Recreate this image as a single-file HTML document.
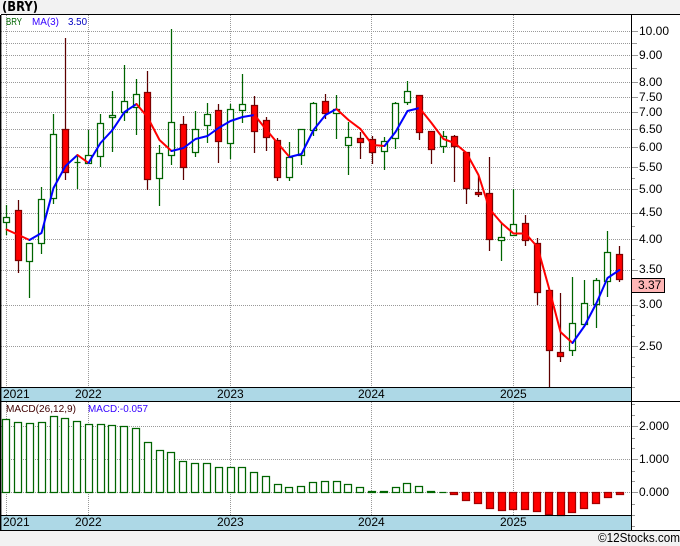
<!DOCTYPE html>
<html><head><meta charset="utf-8"><style>
html,body{margin:0;padding:0;background:#f2f2f2}
svg{display:block}
text{font-family:"Liberation Sans",Arial,sans-serif;font-size:12px;fill:#000}
.l{shape-rendering:crispEdges}
</style></head><body>
<svg width="680" height="546" viewBox="0 0 680 546" xmlns="http://www.w3.org/2000/svg">
<rect x="0" y="0" width="680" height="546" fill="#f2f2f2"/>
<rect x="0" y="14" width="680" height="516" fill="#fff"/>
<rect x="1" y="388" width="630" height="13" fill="#add8e6"/>
<rect x="1" y="516" width="630" height="14" fill="#add8e6"/>

<!-- grid -->
<g class="l" stroke="#999" stroke-width="1" stroke-dasharray="1 1" fill="none">
<path d="M1 31.5H631M1 43.5H631M1 55.5H631M1 68.5H631M1 82.5H631M1 97.5H631M1 112.5H631M1 129.5H631M1 147.5H631M1 167.5H631M1 189.5H631M1 213.5H631M1 239.5H631M1 270.5H631M1 305.5H631M1 346.5H631"/>
<path d="M1 426.5H631M1 459.5H631M1 492.5H631"/>
<path d="M6.5 15V387M88.5 15V387M230.5 15V387M371.5 15V387M513.5 15V387"/>
<path d="M6.5 402V515M88.5 402V515M230.5 402V515M371.5 402V515M513.5 402V515"/>
</g>

<!-- wicks -->
<g fill="none" stroke-width="1.25">
<path stroke="#006400" d="M6.5 205V235M29.5 243V298M41.5 187V254M53.5 114V204M77.5 155V189M88.5 130V163M100.5 114V167M112.5 91V152M124.5 65V121M136.5 79V135M159.5 145V206M171.5 29V165M195.5 111V157M207.5 103V143M230.5 104V159M242.5 74V123M289.5 142V181M301.5 129V165M313.5 102V136M336.5 95V139M348.5 122V175M384.5 137V170M395.5 102V149M407.5 81V105M443.5 131V153M501.5 223V261M513.5 189V235M572.5 277V356M584.5 280V324M596.5 278V328M607.5 231V297"/>
<path stroke="#5c0000" d="M18.5 200V273M65.5 38V180M147.5 71V190M183.5 116V180M218.5 104V163M254.5 96V153M266.5 117V151M277.5 138V181M325.5 94V119M360.5 132V159M372.5 136V164M419.5 95V140M431.5 131V164M454.5 135V182M466.5 152V204M478.5 175V197M489.5 157V251M525.5 215V246M537.5 238V305M549.5 290V387M560.5 293V362M619.5 246V282"/>
<!-- hollow bodies -->
<path fill="#fff" stroke="#006400" d="M3.5 217.5h6v5h-6zM26.5 243.5h6v18h-6zM38.5 199.5h6v44h-6zM50.5 134.5h6v64h-6zM74.5 162.5h6v0h-6zM85.5 155.5h6v8h-6zM97.5 123.5h6v33h-6zM109.5 115.5h6v2h-6zM121.5 101.5h6v11h-6zM133.5 94.5h6v13h-6zM156.5 153.5h6v25h-6zM168.5 122.5h6v33h-6zM192.5 129.5h6v23h-6zM204.5 114.5h6v11h-6zM227.5 109.5h6v34h-6zM239.5 104.5h6v6h-6zM286.5 157.5h6v20h-6zM298.5 129.5h6v26h-6zM310.5 103.5h6v27h-6zM333.5 109.5h6v4h-6zM345.5 137.5h6v8h-6zM381.5 141.5h6v10h-6zM392.5 103.5h6v35h-6zM404.5 91.5h6v11h-6zM440.5 136.5h6v10h-6zM498.5 237.5h6v3h-6zM510.5 224.5h6v11h-6zM569.5 323.5h6v27h-6zM581.5 303.5h6v21h-6zM593.5 280.5h6v24h-6zM604.5 252.5h6v29h-6z"/>
<!-- red bodies -->
<path fill="#ff0000" stroke="#800000" d="M15.5 210.5h6v50h-6zM62.5 129.5h6v43h-6zM144.5 92.5h6v87h-6zM180.5 124.5h6v43h-6zM215.5 110.5h6v31h-6zM251.5 105.5h6v26h-6zM263.5 120.5h6v17h-6zM274.5 140.5h6v37h-6zM322.5 101.5h6v12h-6zM357.5 138.5h6v4h-6zM369.5 139.5h6v13h-6zM416.5 95.5h6v37h-6zM428.5 131.5h6v18h-6zM451.5 136.5h6v10h-6zM463.5 152.5h6v36h-6zM475.5 192.5h6v2h-6zM486.5 193.5h6v46h-6zM522.5 223.5h6v17h-6zM534.5 243.5h6v49h-6zM546.5 290.5h6v60h-6zM557.5 352.5h6v4h-6zM616.5 254.5h6v25h-6z"/>
</g>

<!-- MA -->
<g fill="none" stroke-width="2" stroke-linejoin="round" stroke-linecap="round">
<path stroke="#ff0000" d="M6.5 229.5L18.5 235L29.5 240"/>
<path stroke="#0000ff" d="M29.5 240L41.5 233L53.5 188L65.5 166L77.5 155"/>
<path stroke="#ff0000" d="M77.5 155L88.5 163"/>
<path stroke="#0000ff" d="M88.5 163L100.5 143L112.5 130L124.5 112L136.5 104"/>
<path stroke="#ff0000" d="M136.5 104L147.5 117L159.5 140L171.5 151"/>
<path stroke="#0000ff" d="M171.5 151L183.5 148L195.5 139L207.5 136L218.5 128L230.5 121L242.5 117L254.5 115"/>
<path stroke="#ff0000" d="M254.5 115L266.5 130L277.5 143L289.5 157"/>
<path stroke="#0000ff" d="M289.5 157L301.5 154L313.5 130L325.5 115L336.5 109"/>
<path stroke="#ff0000" d="M336.5 109L348.5 120L360.5 129L372.5 145L384.5 146"/>
<path stroke="#0000ff" d="M384.5 146L395.5 132L407.5 111L419.5 108"/>
<path stroke="#ff0000" d="M419.5 108L431.5 123L443.5 139L454.5 143L466.5 153L478.5 175L489.5 209L501.5 223L513.5 233.5L525.5 233.5L537.5 247L549.5 290L560.5 332L572.5 343"/>
<path stroke="#0000ff" d="M572.5 343L584.5 326L596.5 303L607.5 278L619.5 270"/>
</g>

<!-- MACD bars -->
<g stroke-width="1.25">
<path fill="#fff" stroke="#006400" d="M2.5 419.5h7V492.5h-7zM14.5 422.5h7V492.5h-7zM26.5 423.5h7V492.5h-7zM38.5 422.5h7V492.5h-7zM50.5 416.5h7V492.5h-7zM61.5 418.5h7V492.5h-7zM73.5 421.5h7V492.5h-7zM85.5 424.5h7V492.5h-7zM97.5 424.5h7V492.5h-7zM108.5 425.5h7V492.5h-7zM120.5 426.5h7V492.5h-7zM132.5 428.5h7V492.5h-7zM144.5 442.5h7V492.5h-7zM156.5 450.5h7V492.5h-7zM167.5 452.5h7V492.5h-7zM179.5 461.5h7V492.5h-7zM191.5 463.5h7V492.5h-7zM203.5 463.5h7V492.5h-7zM215.5 467.5h7V492.5h-7zM227.5 467.5h7V492.5h-7zM238.5 467.5h7V492.5h-7zM250.5 472.5h7V492.5h-7zM262.5 476.5h7V492.5h-7zM274.5 484.5h7V492.5h-7zM285.5 487.5h7V492.5h-7zM297.5 486.5h7V492.5h-7zM309.5 482.5h7V492.5h-7zM321.5 481.5h7V492.5h-7zM333.5 481.5h7V492.5h-7zM344.5 484.5h7V492.5h-7zM356.5 487.5h7V492.5h-7zM368.5 491.5h7V492.5h-7zM380.5 491.5h7V492.5h-7zM392.5 487.5h7V492.5h-7zM403.5 483.5h7V492.5h-7zM415.5 486.5h7V492.5h-7zM427.5 491.5h7V492.5h-7zM439.5 492.5h7V492.5h-7z"/>
<path fill="#ff0000" stroke="#a00000" d="M450.5 492.5h7V494.5h-7zM462.5 492.5h7V500.5h-7zM474.5 492.5h7V503.5h-7zM486.5 492.5h7V508.5h-7zM498.5 492.5h7V510.5h-7zM509.5 492.5h7V509.5h-7zM521.5 492.5h7V509.5h-7zM533.5 492.5h7V511.5h-7zM545.5 492.5h7V514.5h-7zM557.5 492.5h7V515.5h-7zM568.5 492.5h7V512.5h-7zM580.5 492.5h7V508.5h-7zM592.5 492.5h7V503.5h-7zM604.5 492.5h7V497.5h-7zM616.5 492.5h7V494.5h-7z"/>
</g>

<!-- axis ticks -->
<g class="l" stroke="#999" stroke-width="1" fill="none">
<path d="M632 31.5h6M632 43.5h5M632 55.5h6M632 68.5h5M632 82.5h6M632 97.5h6M632 112.5h6M632 129.5h6M632 147.5h6M632 167.5h6M632 178.5h3M632 189.5h6M632 213.5h6M632 226.5h3M632 239.5h6M632 259.5h3M632 270.5h6M632 305.5h6M632 315.5h3M632 325.5h3M632 336.5h3M632 346.5h6M632 357.5h3M632 366.5h3M632 377.5h3M632 387.5h3"/>
<path d="M632 404.5h3M632 415.5h3M632 426.5h6M632 438.5h3M632 448.5h3M632 459.5h6M632 471.5h3M632 481.5h3M632 492.5h6M632 504.5h3M632 515.5h3M632 526.5h3"/>
</g>

<!-- frame -->
<g class="l" stroke="#000" stroke-width="1" fill="none">
<path d="M1 14.5H680"/>
<path d="M0 387.5H632"/>
<path d="M0 401.5H680"/>
<path d="M0 515.5H632"/>
<path d="M0 530.5H680"/>
<path d="M631.5 14V531"/>
<path d="M0.5 15V531"/>
</g>
<rect x="0" y="15" width="1.4" height="515" fill="#000"/>

<!-- price box -->
<rect class="l" x="631.5" y="278.5" width="33" height="14" fill="#ffb6b6" stroke="#000"/>

<!-- labels -->
<text x="2" y="11" style="font-family:'DejaVu Sans',sans-serif;font-weight:700;font-size:13px" textLength="36" lengthAdjust="spacingAndGlyphs">(BRY)</text>
<text x="6" y="25" style="font-size:10px;fill:#006400" textLength="16" lengthAdjust="spacingAndGlyphs">BRY</text>
<text x="32" y="25" style="font-size:10px;fill:#3300ff" textLength="27" lengthAdjust="spacingAndGlyphs">MA(3)</text>
<text x="68" y="25" style="font-size:10px;fill:#0000c0" textLength="19" lengthAdjust="spacingAndGlyphs">3.50</text>

<text x="639" y="35">10.00</text>
<text x="639" y="59">9.00</text>
<text x="639" y="86">8.00</text>
<text x="639" y="101">7.50</text>
<text x="639" y="116">7.00</text>
<text x="639" y="133">6.50</text>
<text x="639" y="151">6.00</text>
<text x="639" y="171">5.50</text>
<text x="639" y="193">5.00</text>
<text x="639" y="216">4.50</text>
<text x="639" y="243">4.00</text>
<text x="639" y="273">3.50</text>
<text x="638" y="289">3.37</text>
<text x="639" y="308">3.00</text>
<text x="639" y="350">2.50</text>

<text x="3" y="398">2021</text>
<text x="75" y="398">2022</text>
<text x="217" y="398">2023</text>
<text x="358" y="398">2024</text>
<text x="500" y="398">2025</text>

<text x="6" y="412" style="font-size:10px;fill:#400000" textLength="70" lengthAdjust="spacingAndGlyphs">MACD(26,12,9)</text>
<text x="88" y="412" style="font-size:10px;fill:#3300ff" textLength="60" lengthAdjust="spacingAndGlyphs">MACD:-0.057</text>

<text x="639" y="430">2.000</text>
<text x="639" y="463">1.000</text>
<text x="639" y="496">0.000</text>

<text x="3" y="526">2021</text>
<text x="75" y="526">2022</text>
<text x="217" y="526">2023</text>
<text x="358" y="526">2024</text>
<text x="500" y="526">2025</text>

<text x="598" y="542" style="font-size:13px" textLength="82" lengthAdjust="spacingAndGlyphs">©12Stocks.com</text>
</svg>
</body></html>
